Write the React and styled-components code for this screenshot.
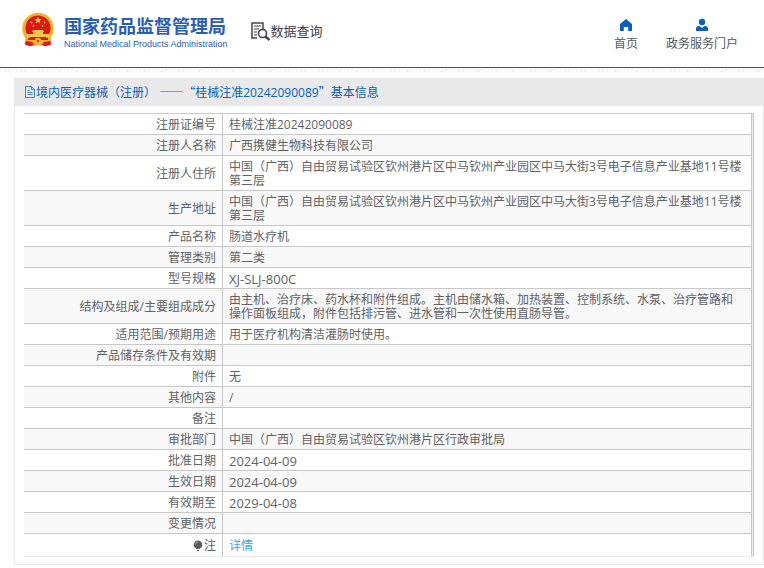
import React from "react";
import styled, { createGlobalStyle } from "styled-components";

const GlobalStyle = createGlobalStyle`
  * { box-sizing: border-box; }
  body {
    margin: 0;
    background: #fff;
    color: #606266;
    font-family: "Open Sans", "Noto Sans CJK SC", sans-serif;
    font-size: 12px;
    line-height: 14px;
  }
`;

const Header = styled.header`
  display: flex;
  align-items: flex-start;
  height: 68px;
  padding-left: 21px;
  padding-right: 26px;
  border-bottom: 1px solid #0061c2;
`;

const Brand = styled.a`
  display: flex;
  gap: 9px;
  padding-top: 12px;
  color: #2b5db0;
  text-decoration: none;
`;

const BrandText = styled.span`
  display: flex;
  flex-direction: column;
  padding-top: 3px;
  white-space: nowrap;
`;

const BrandName = styled.strong`
  font-size: 18px;
  line-height: 22px;
  font-weight: 700;
`;

const BrandLatin = styled.span`
  font-family: "Liberation Sans", sans-serif;
  font-size: 9px;
  line-height: 14px;
`;

const Search = styled.a`
  display: flex;
  align-items: center;
  height: 20px;
  margin-top: 21px;
  margin-left: 22px;
  color: #414048;
  font-size: 13px;
  text-decoration: none;
  white-space: nowrap;
`;

const Nav = styled.nav`
  display: flex;
  gap: 28px;
  margin-left: auto;
  padding-top: 18px;
`;

const NavLink = styled.a`
  display: flex;
  flex-direction: column;
  align-items: center;
  gap: 3px;
  color: #55565c;
  text-decoration: none;
  white-space: nowrap;
  line-height: 18px;
`;

const Hatch = styled.div`
  height: 3px;
  margin-top: 1px;
  background: repeating-linear-gradient(135deg, #fff 0 1px, #ececec 1px 2px, #fff 2px 3px);
`;

const Panel = styled.main`
  margin: 6px 0 3px 14px;
  border: 1px solid #e8e8e8;
`;

const PanelTitle = styled.h1`
  display: flex;
  align-items: center;
  height: 27px;
  margin: 0;
  padding-left: 9px;
  background: #e9e9e9;
  border-bottom: 1px solid #e8eaf2;
  color: #0b5fbd;
  font-size: 12px;
  font-weight: 400;
  white-space: pre;
`;

const Wide = styled.span`
  font-family: "Noto Sans CJK SC", sans-serif;
`;

const TableFrame = styled.div`
  margin: 7px 9px;
  padding-right: 1px;
  background: #ebebf3;
  border-top: 1px solid #ccc;
  border-right: 1px solid #c8c8cf;
  border-bottom: 1px solid #ebebf3;
`;

const Table = styled.table`
  width: 100%;
  border-spacing: 0;
  table-layout: fixed;
`;

const LabelColumn = styled.col`
  width: 199px;
`;

const Row = styled.tr`
  background: #fff;
  &:nth-child(even) { background: #f8f8f8; }
  & > * {
    height: 21px;
    padding: 4px 6px 2px;
    border-right: 1px solid #c8c8cc;
    border-bottom: 1px solid #c8c8c8;
    vertical-align: middle;
  }
  & > td { padding-right: 8px; }
  &:last-child > * { height: 22px; border-bottom: 0; }
`;

const Label = styled.th`
  font-weight: 400;
  text-align: right;
`;

const Value = styled.td`
  text-align: left;
`;

const Code = styled.span`
  display: block;
  font-size: 13px;
`;

const NoteLabel = styled.span`
  display: flex;
  align-items: center;
  justify-content: flex-end;
  gap: 1px;
`;

const DetailLink = styled.a`
  color: #409eff;
  text-decoration: none;
`;

const Emblem = () => (
  <svg width="34" height="36" viewBox="0 0 34 36" aria-hidden="true">
    <path d="M5 24h24l1 9-7 1-4-2h-4l-4 2-7-1z" fill="#dc2119" />
    <circle cx="17" cy="16.5" r="15.8" fill="#f1bd29" />
    <circle cx="17" cy="16.5" r="14.2" fill="none" stroke="#e59b20" strokeWidth=".6" strokeDasharray="2 1" />
    <circle cx="17" cy="16" r="12.6" fill="#db1717" />
    <path d="M17 4.7l1 2.3 2.6.2-2 1.7.7 2.6-2.3-1.4-2.3 1.4.7-2.6-2-1.7L16 7z" fill="#ffc735" />
    <g fill="#f6bf37"><circle cx="10.5" cy="10.5" r="1" /><circle cx="23.5" cy="10.5" r="1" /><circle cx="12.5" cy="14" r="1" /><circle cx="21.5" cy="14" r="1" /></g>
    <path d="M12 18h10l1 2h-1v2h6v3H6v-3h6v-2h-1z" fill="#f6c644" />
    <path d="M7 26h20v2H7z" fill="#d81b18" />
    <path d="M4 26c4 4 7 4 10 2l3-2 3 2c3 2 6 2 10-2l-1 4c-4 3-7 1-9 0l-3-1-3 1c-2 1-5 3-9 0z" fill="#f3c033" />
    <circle cx="17" cy="29" r="3.2" fill="#efb72d" />
    <circle cx="17" cy="29" r="1.2" fill="#d9441d" />
    <path d="M5 29l7 1-2 4-5-1zm24 0l-7 1 2 4 5-1z" fill="#da1c18" />
    <path d="M13 33l4-2 4 2-1 1-3-1-3 1z" fill="#eeb72e" />
  </svg>
);

const SearchIcon = () => (
  <svg width="21" height="20" viewBox="0 0 21 20" fill="none" stroke="#45424f" aria-hidden="true">
    <path d="M7 17H2V2h11v6M2 2v15" strokeWidth="1.5" />
    <path d="M4 5h7M4 8h5M4 11h3M4 14h3" strokeWidth="1" />
    <circle cx="12.5" cy="12.5" r="4" strokeWidth="1.6" />
    <path d="M15.5 15.5l4 3.5" strokeWidth="2.4" />
  </svg>
);

const HomeIcon = () => (
  <svg width="14" height="14" viewBox="0 0 14 14" aria-hidden="true">
    <path d="M7 1l6 5v7H9.2V9H4.8v4H1V6z" fill="#0860c2" />
  </svg>
);

const PersonIcon = () => (
  <svg width="14" height="14" viewBox="0 0 14 14" aria-hidden="true">
    <circle cx="7" cy="4" r="3.2" fill="#0860c2" />
    <path d="M1 13v-2.5C1 8.6 3 8 4.5 8L7 10l2.5-2C11 8 13 8.600 13 10.500V13z" fill="#0860c2" />
  </svg>
);

const DocumentIcon = () => (
  <svg width="12" height="12" viewBox="0 0 12 12" fill="none" stroke="#4a84cc" aria-hidden="true">
    <path d="M1.500 .5h6l3 3v8h-9zM7.500 .5v3h3M3.500 4.500h2M3.500 6.500h5M3.500 8.500h5" />
  </svg>
);

const BulbIcon = () => (
  <svg width="10" height="12" viewBox="0 0 10 12" aria-hidden="true">
    <path d="M5 .5a4.200 4.200 0 0 1 2.500 7.600L6.500 9h-3l-1-.9A4.200 4.200 0 0 1 5 .5zM3.500 10h3L5 11.500z" fill="#5b5c60" />
    <path d="M2.500 4.500A2.500 2.500 0 0 1 5 2" fill="none" stroke="#c8c8ca" strokeWidth=".8" />
  </svg>
);

const address =
  "中国（广西）自由贸易试验区钦州港片区中马钦州产业园区中马大街3号电子信息产业基地11号楼第三层";

const records = [
  { label: "注册证编号", value: "桂械注准20242090089" },
  { label: "注册人名称", value: "广西携健生物科技有限公司" },
  { label: "注册人住所", value: address },
  { label: "生产地址", value: address },
  { label: "产品名称", value: "肠道水疗机" },
  { label: "管理类别", value: "第二类" },
  { label: "型号规格", value: "XJ-SLJ-800C", code: true },
  {
    label: "结构及组成/主要组成成分",
    value:
      "由主机、治疗床、药水杯和附件组成。主机由储水箱、加热装置、控制系统、水泵、治疗管路和操作面板组成，附件包括排污管、进水管和一次性使用直肠导管。",
  },
  { label: "适用范围/预期用途", value: "用于医疗机构清洁灌肠时使用。" },
  { label: "产品储存条件及有效期", value: "" },
  { label: "附件", value: "无" },
  { label: "其他内容", value: "/" },
  { label: "备注", value: "" },
  { label: "审批部门", value: "中国（广西）自由贸易试验区钦州港片区行政审批局" },
  { label: "批准日期", value: "2024-04-09", code: true },
  { label: "生效日期", value: "2024-04-09", code: true },
  { label: "有效期至", value: "2029-04-08", code: true },
  { label: "变更情况", value: "" },
];

export default function App() {
  return (
    <div lang="zh-CN">
      <GlobalStyle />
      <Header>
        <Brand href="#">
          <Emblem />
          <BrandText>
            <BrandName>国家药品监督管理局</BrandName>
            <BrandLatin>National Medical Products Administration</BrandLatin>
          </BrandText>
        </Brand>
        <Search href="#search">
          <SearchIcon />
          数据查询
        </Search>
        <Nav>
          <NavLink href="#home">
            <HomeIcon />
            首页
          </NavLink>
          <NavLink href="#portal">
            <PersonIcon />
            政务服务门户
          </NavLink>
        </Nav>
      </Header>
      <Hatch />
      <Panel>
        <PanelTitle>
          <DocumentIcon />
          <span>
            境内医疗器械（注册） <Wide>——“</Wide>桂械注准20242090089<Wide>”</Wide>基本信息
          </span>
        </PanelTitle>
        <TableFrame>
          <Table>
            <colgroup>
              <LabelColumn />
              <col />
            </colgroup>
            <tbody>
              {records.map(({ label, value, code }) => (
                <Row key={label}>
                  <Label scope="row">{label}</Label>
                  <Value>{code ? <Code>{value}</Code> : value}</Value>
                </Row>
              ))}
              <Row>
                <Label scope="row">
                  <NoteLabel>
                    <BulbIcon />注
                  </NoteLabel>
                </Label>
                <Value>
                  <DetailLink href="#detail">详情</DetailLink>
                </Value>
              </Row>
            </tbody>
          </Table>
        </TableFrame>
      </Panel>
    </div>
  );
}
